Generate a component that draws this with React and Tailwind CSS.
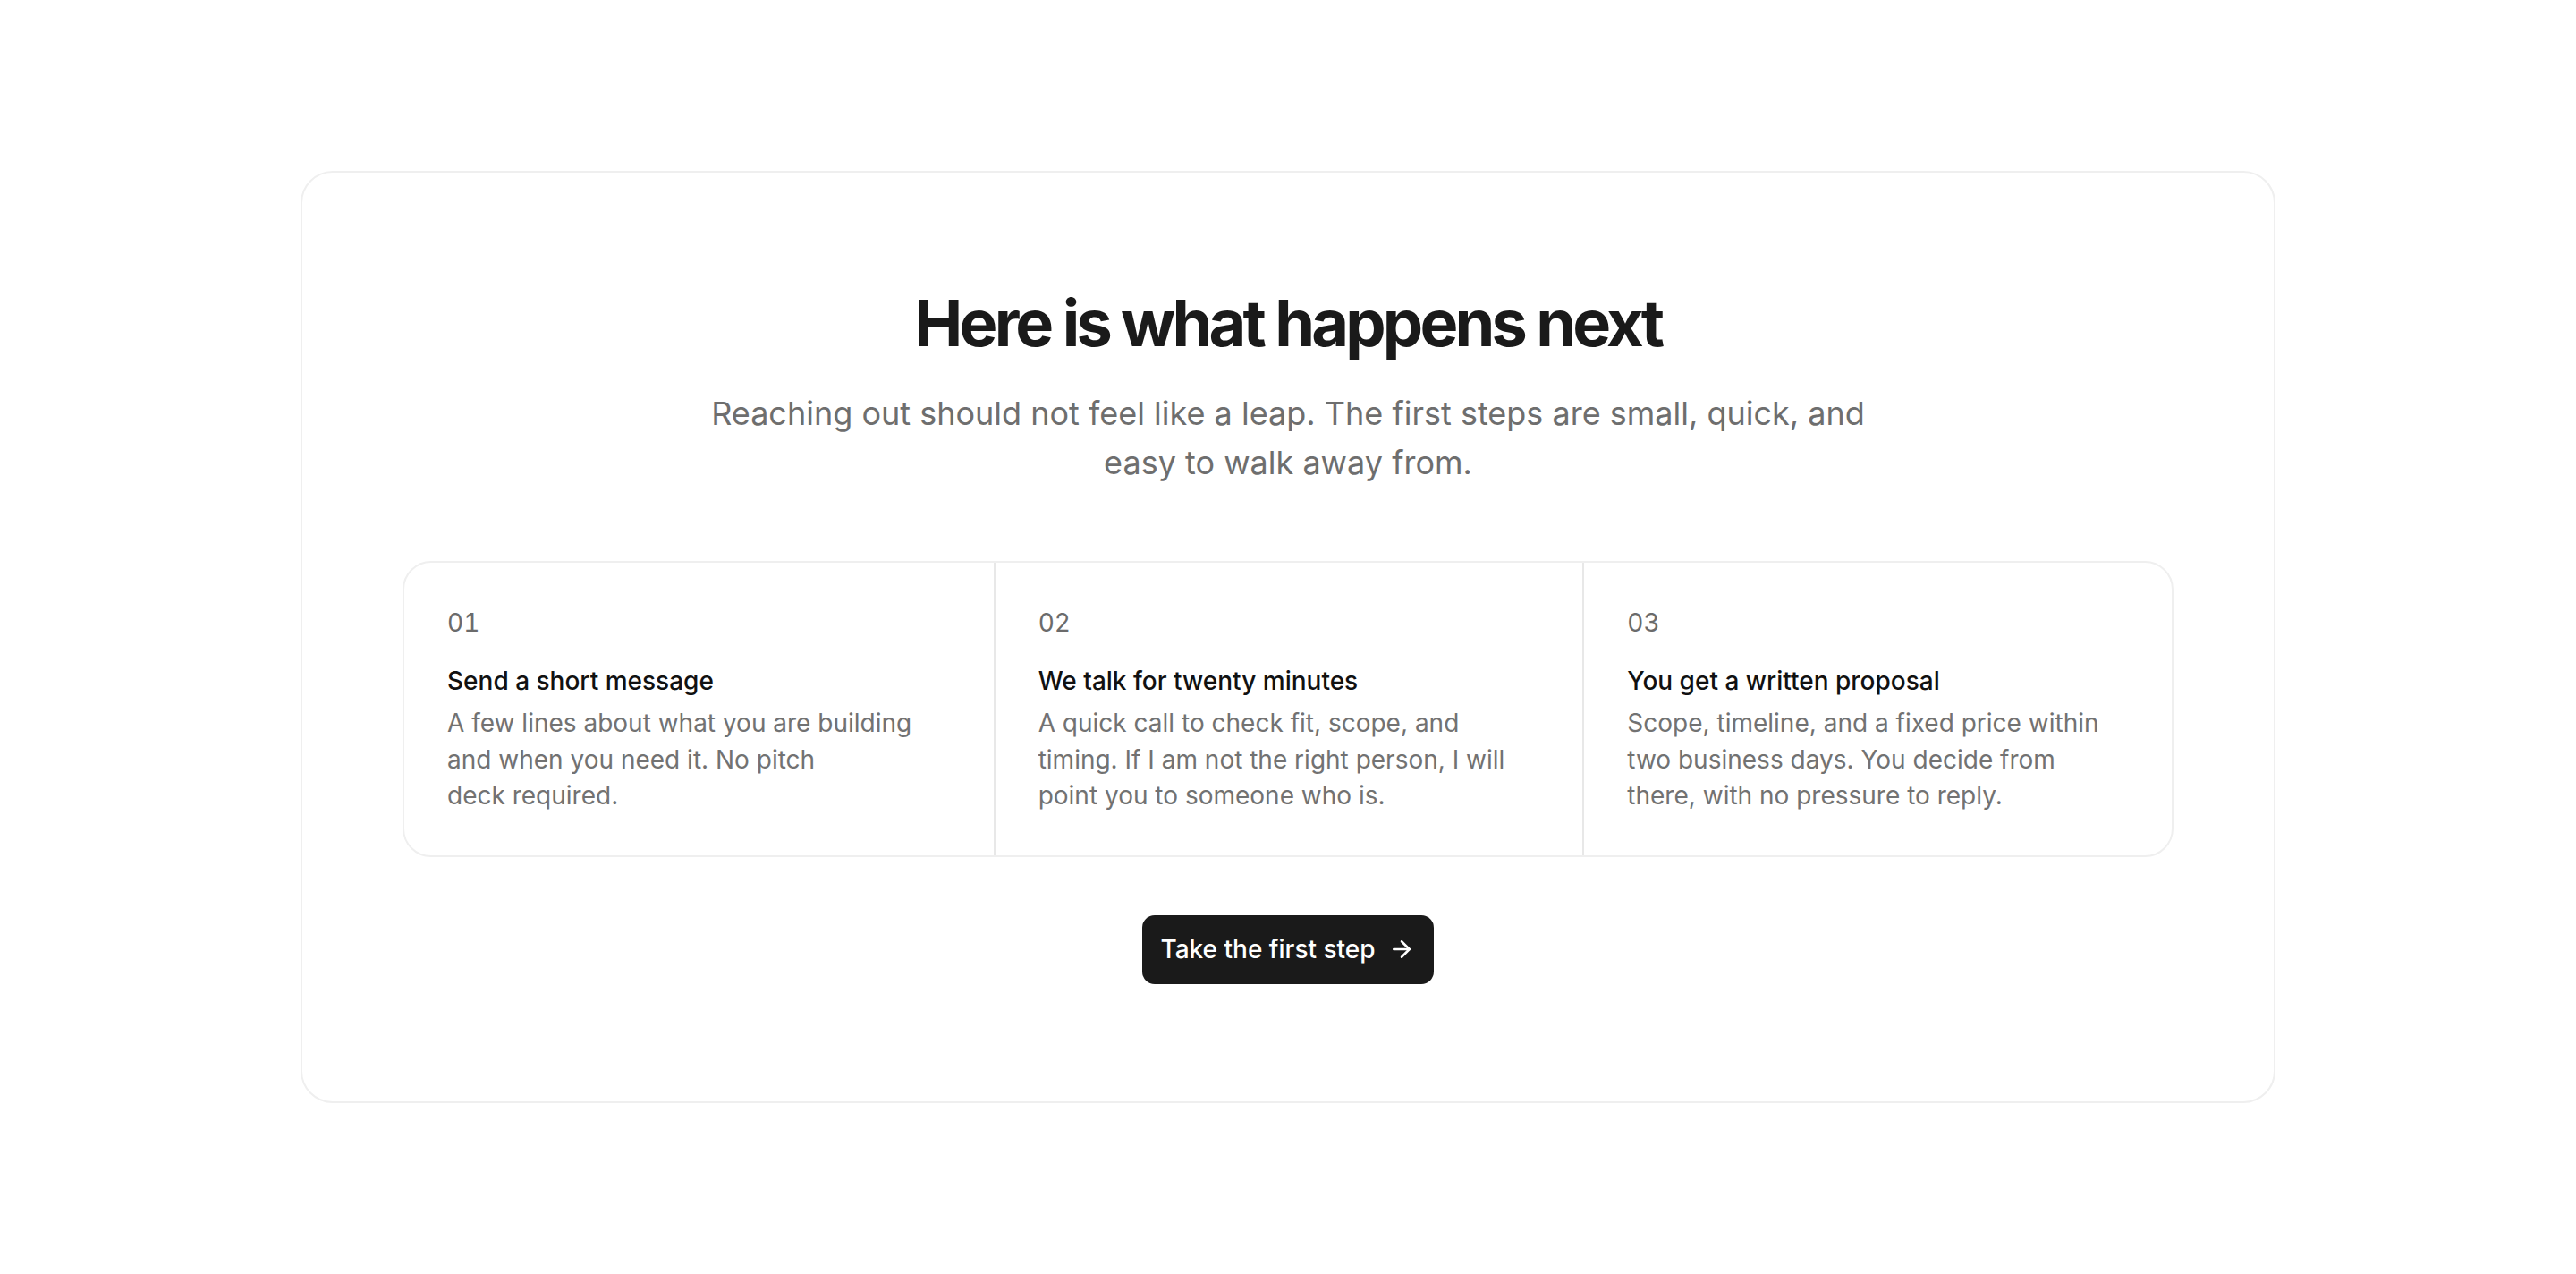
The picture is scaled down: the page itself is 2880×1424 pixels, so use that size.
import React from "react";
import { ArrowRight } from "lucide-react";

const steps = [
  {
    num: "01",
    title: "Send a short message",
    body: (
      <>
        A few lines about what you are building
        <br />
        and when you need it. No pitch
        <br />
        deck required.
      </>
    ),
  },
  {
    num: "02",
    title: "We talk for twenty minutes",
    body: "A quick call to check fit, scope, and timing. If I am not the right person, I will point you to someone who is.",
  },
  {
    num: "03",
    title: "You get a written proposal",
    body: "Scope, timeline, and a fixed price within two business days. You decide from there, with no pressure to reply.",
  },
];

export default function App() {
  return (
    <div
      className="min-h-screen bg-white pt-[191px] pb-[193px]"
      style={{ fontFamily: "Inter, 'Noto Sans', sans-serif" }}
    >
      <section className="mx-auto flex w-[2208px] flex-col items-center rounded-[36px] border-2 border-[#efefef] bg-white px-[112px] pt-[128px] pb-[131px]">
        <h2 className="text-[72px] font-bold leading-[80px] tracking-[-0.053em] text-[#1a1a1a]">
          Here is what happens next
        </h2>
        <p className="mt-[34px] max-w-[1320px] text-center text-[36px] leading-[55px] text-[#6e6e6e]">
          Reaching out should not feel like a leap. The first steps are small, quick, and easy to walk away from.
        </p>

        <div className="mt-[82px] grid w-full grid-cols-3 rounded-[32px] border-2 border-[#efefef]">
          {steps.map((s, i) => (
            <div
              key={s.num}
              className={
                i === 0
                  ? "px-[48px] pt-[47px] pb-[46px]"
                  : "border-l-2 border-[#e8e8e8] px-[48px] pt-[47px] pb-[46px]"
              }
            >
              <div className="text-[28px] leading-[40px] tabular-nums text-[#6b6b6b]">{s.num}</div>
              <h3 className="mt-[25px] text-[28px] font-medium leading-[40px] text-[#111111]">
                {s.title}
              </h3>
              <p className="mt-[7px] text-[28px] leading-[40.5px] text-[#727272]">
                {s.body}
              </p>
            </div>
          ))}
        </div>

        <button className="mt-[65px] flex h-[77px] items-center gap-[14px] rounded-[14px] bg-[#1a1a1a] pl-[20px] pr-[21px] text-[28px] font-medium text-white">
          Take the first step
          <ArrowRight size={30} strokeWidth={2} />
        </button>
      </section>
    </div>
  );
}
